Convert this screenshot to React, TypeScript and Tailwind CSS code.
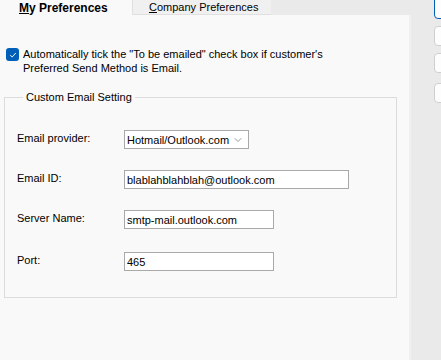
import {ChevronDown} from "lucide-react";

const font = {fontFamily: '"Liberation Sans", Arial, sans-serif'};

function Field({label, children}: {label: string; children: React.ReactNode}) {
  return (
    <div className="flex h-[19px] items-center">
      <span className="w-[107px] -translate-y-[2px]">{label}</span>
      {children}
    </div>
  );
}

export default function App() {
  return (
    <div className="flex h-[360px] w-[441px] overflow-hidden bg-[#eaeaea] text-[11px] leading-[14px] text-black" style={font}>
      <div className="flex w-[411px] shrink-0 flex-col">
        {/* tabs */}
        <div className="flex h-[15px] items-end whitespace-nowrap">
          <div className="flex h-[15px] w-[132px] items-center bg-[#f9f9f9] pl-[19px] text-[12px] font-bold leading-none">
            <span>
              <span className="underline">M</span>y Preferences
            </span>
          </div>
          <div className="flex h-[15px] w-[139px] items-center border-b border-l border-[#e0e0e0] bg-[#f0f0f0] pl-[16px] leading-none">
            <span>
              <span className="underline">C</span>ompany Preferences
            </span>
          </div>
        </div>
        <div className="flex-1 border-r-2 border-[#f0f0f0] bg-[#f9f9f9]">
          {/* checkbox */}
          <div className="mt-[32px] flex gap-[4px] pl-[6px]">
            <div className="mt-[1px] flex h-[13px] w-[13px] shrink-0 items-center justify-center rounded-[3px] bg-[#005fb8]">
              <svg viewBox="0 0 10 10" className="h-[8px] w-[8px]" fill="none" stroke="white" strokeWidth={1.2}>
                <path d="M1.5 5.2 L4 7.5 L8.5 2.5" />
              </svg>
            </div>
            <p>
              Automatically tick the "To be emailed" check box if customer's
              <br />
              Preferred Send Method is Email.
            </p>
          </div>
          {/* group */}
          <fieldset className="mt-[15px] ml-[4px] h-[208px] w-[393px] border border-[#dcdcdc] pt-[26px] pl-[12px]">
            <legend className="ml-[6px] px-[3px]">Custom Email Setting</legend>
            <div className="flex flex-col gap-[21px]">
              <Field label="Email provider:">
                <div className="flex h-[19px] w-[125px] items-center border border-[#a9a9a9] bg-white pl-[2px]">
                  <span className="flex-1 whitespace-nowrap">Hotmail/Outlook.com</span>
                  <span className="mr-[3px] h-[17px] w-px bg-[#f0f0f0]" />
                  <ChevronDown className="mr-[5px] h-[12px] w-[12px] shrink-0 text-[#555]" strokeWidth={1.2} />
                </div>
              </Field>
              <Field label="Email ID:">
                <div className="flex h-[19px] w-[225px] items-center border border-[#a9a9a9] bg-white pl-[2px]">
                  blablahblahblah@outlook.com
                </div>
              </Field>
              <Field label="Server Name:">
                <div className="flex h-[19px] w-[150px] items-center border border-[#a9a9a9] bg-white pl-[2px]">
                  smtp-mail.outlook.com
                </div>
              </Field>
              <div className="mt-[2px]">
                <Field label="Port:">
                  <div className="flex h-[19px] w-[150px] items-center border border-[#a9a9a9] bg-white pl-[2px]">
                    465
                  </div>
                </Field>
              </div>
            </div>
          </fieldset>
        </div>
      </div>
      {/* side buttons */}
      <div className="mt-[-8px] ml-[23px] flex shrink-0 flex-col gap-[7px]">
        <div className="h-[27px] w-[20px] rounded-[4px] border border-[#005fb8] bg-[#fdfdfd]" />
        <div className="h-[20px] w-[20px] rounded-[4px] border border-[#cfcfcf] bg-[#fdfdfd]" />
        <div className="h-[20px] w-[20px] rounded-[4px] border border-[#cfcfcf] bg-[#fdfdfd]" />
        <div className="mt-[3px] h-[20px] w-[20px] rounded-[4px] border border-[#cfcfcf] bg-[#fdfdfd]" />
      </div>
    </div>
  );
}
